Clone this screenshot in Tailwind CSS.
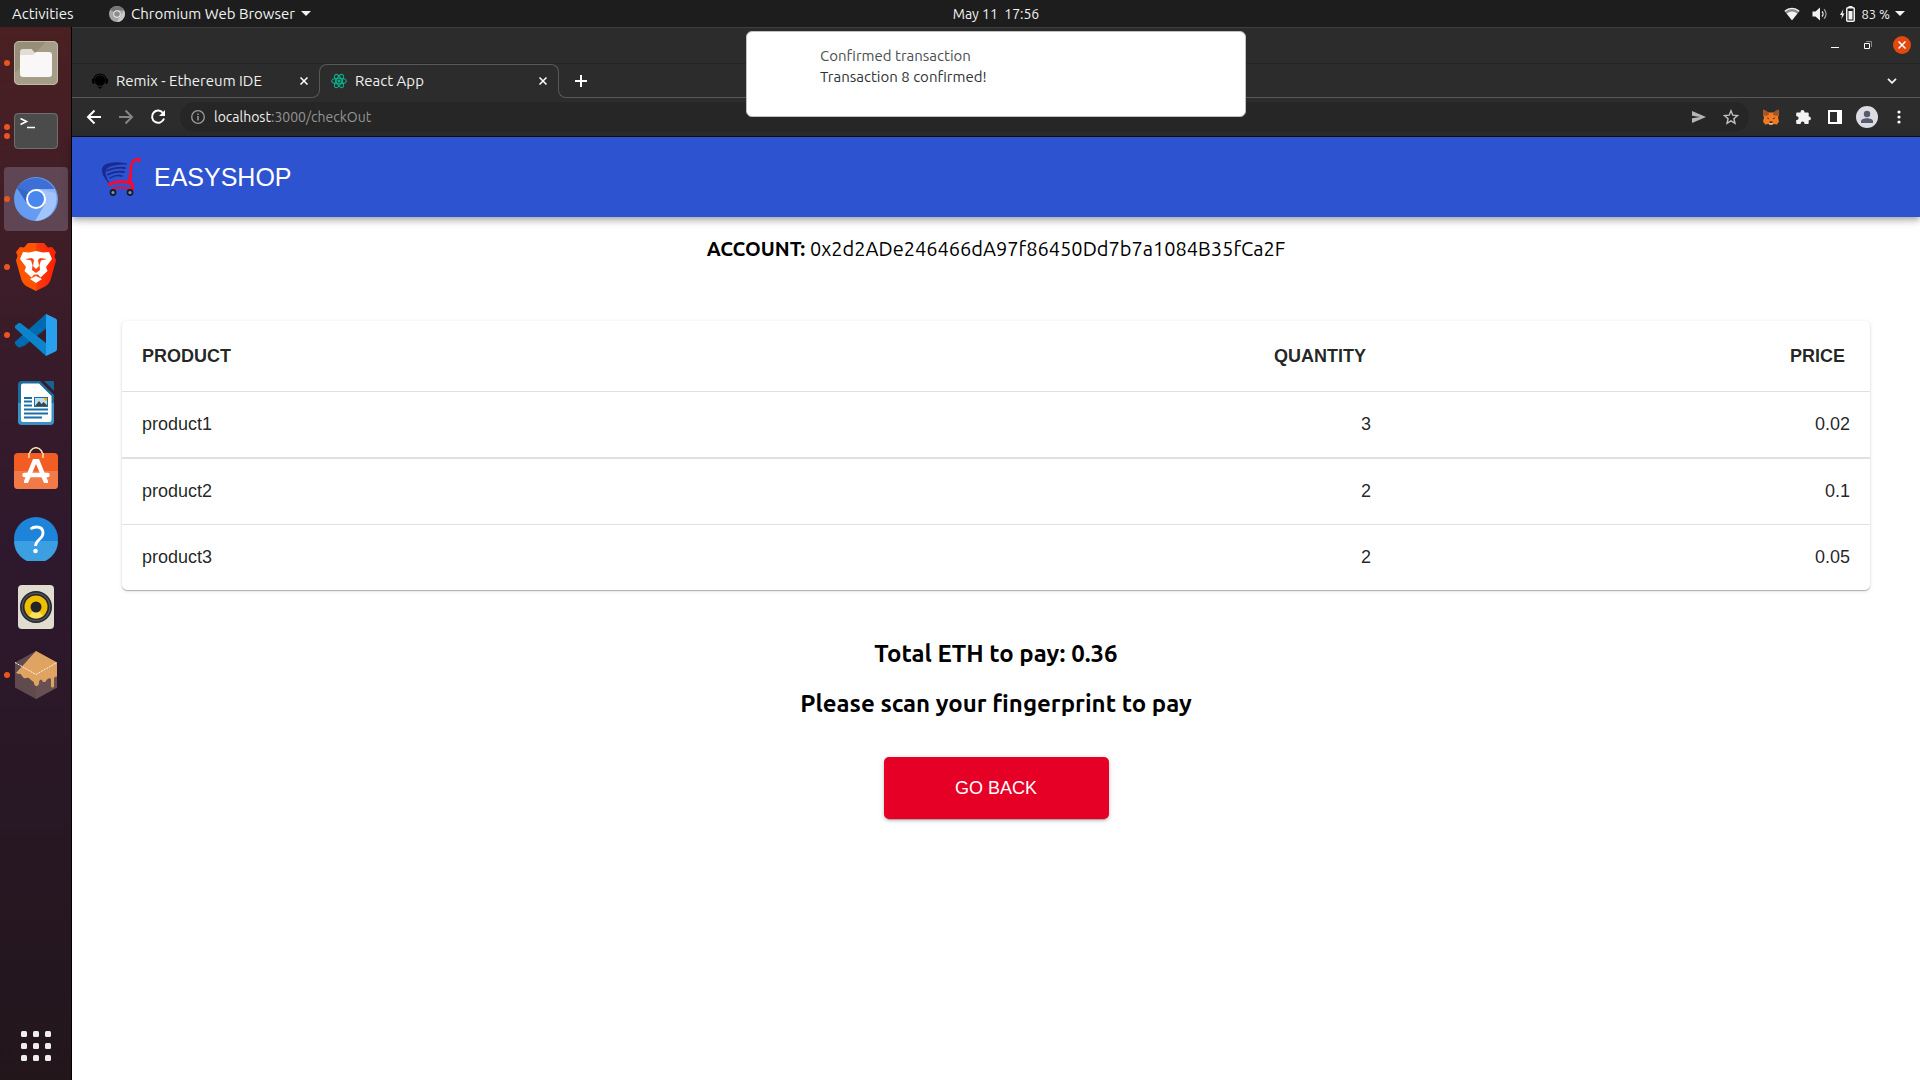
<!DOCTYPE html>
<html lang="en">
<head>
<meta charset="utf-8">
<title>React App</title>
<script src="https://cdn.jsdelivr.net/npm/@tailwindcss/browser@4"></script>
</head>
<body class="flex min-h-screen flex-col bg-white font-['Ubuntu','Noto_Sans',sans-serif] text-[15px] text-black">

<!-- System bar -->
<header class="flex h-[27px] items-center bg-[#1d1d1d] leading-[26px] whitespace-nowrap text-[#f2f2f2]">
  <button class="w-[72px] shrink-0 pl-3 text-left whitespace-nowrap">Activities</button>
  <div class="flex flex-1 basis-0 items-center">
    <button class="ml-[37px] flex items-center gap-[6px]">
      <svg class="size-4" viewBox="0 0 16 16"><circle cx="8" cy="8" r="8" fill="#a5a5a5"/><path d="M8 8 1.2 3.8A8 8 0 0 1 14.9 4.3H8z" fill="#757575"/><path d="M8 16 11.4 10 14.9 4.3A8 8 0 0 1 8 16z" fill="#c9c9c9"/><circle cx="8" cy="8" r="3.7" fill="#eee"/><circle cx="8" cy="8" r="2.8" fill="#8d8d8d"/></svg>
      <span>Chromium Web Browser</span>
      <svg class="h-[5px] w-[10px]" viewBox="0 0 10 5"><path d="M0 0h10L5 5z" fill="#f2f2f2"/></svg>
    </button>
  </div>
  <time class="text-sm leading-[26px] whitespace-pre">May 11  17:56</time>
  <div class="flex flex-1 basis-0 items-center justify-end">
    <svg class="mr-3 h-[14px] w-4" viewBox="0 0 16 14"><path d="M0.6 4.2C4.8 0.2 11.200 0.200 15.400 4.200L8 13.200z" fill="#8b8b8b"/><path d="M.8 4.200C5 .4 11 .4 15.200 4.200" fill="none" stroke="#f2f2f2" stroke-width="1.300"/><path d="M2.600 6.400C6 3.700 10 3.700 13.400 6.400L8 13.200z" fill="#f2f2f2"/></svg>
    <svg class="mr-3 h-[14px] w-4" viewBox="0 0 16 14"><path d="M0.500 4.500h3L8 .5v13L3.500 9.500h-3z" fill="#f2f2f2"/><path d="M10 4.500c1.300 1.300 1.300 3.700 0 5" fill="none" stroke="#f2f2f2" stroke-width="1.300"/><path d="M12 2.300c2.700 2.500 2.700 6.900 0 9.400" fill="none" stroke="#9a9a9a" stroke-width="1.300"/></svg>
    <svg class="mr-[6px] h-4 w-[15px]" viewBox="0 0 15 16"><path d="M3.500 3 0 9h2l-.6 4L4.500 7.500h-2z" fill="#f2f2f2"/><path d="M8.500 0h4v2h-4z" fill="#f2f2f2"/><rect x="6.750" y="1.750" width="7.500" height="13.500" rx="1" fill="none" stroke="#f2f2f2" stroke-width="1.500"/><path d="M8.500 5h4v8.500h-4z" fill="#f2f2f2"/></svg>
    <span class="mr-[5px] text-[13px] leading-[26px]">83 %</span>
    <svg class="mr-[15px] h-[5px] w-[10px]" viewBox="0 0 10 5"><path d="M0 0h10L5 5z" fill="#f2f2f2"/></svg>
  </div>
</header>

<div class="flex flex-1">

<!-- Dock -->
<nav aria-label="Dock" class="flex w-[72px] shrink-0 flex-col gap-1 border-r border-black bg-linear-to-b from-[#4a2022] via-[#2e182d] to-[#22161b] px-1 pt-1 pb-[2px]">
  <button aria-label="Files" class="relative flex size-16 items-center justify-center">
    <span class="absolute left-0 size-[6px] rounded-full bg-[#e95420]"></span>
    <svg class="size-[46px]" viewBox="0 0 46 46"><rect x="1" y="1" width="44" height="44" rx="5" fill="#978e79"/><path d="M1 40V34L34 1h6a5 5 0 0 1 5 5v34a5 5 0 0 1-5 5H6a5 5 0 0 1-5-5z" fill="#a59d88"/><rect x="1.500" y="1.500" width="43" height="43" rx="4.500" fill="none" stroke="#c0b9a6"/><path d="M7 12a3 3 0 0 1 3-3h8.500l4 4.500V20H7z" fill="#e2ddd2"/><path d="M7 15h13l3-3h13a3 3 0 0 1 3 3v19a3 3 0 0 1-3 3H10a3 3 0 0 1-3-3z" fill="#f9f8f7"/></svg>
  </button>
  <button aria-label="Terminal" class="relative flex size-16 items-center justify-center">
    <span class="absolute left-0 flex flex-col gap-[3px]"><span class="size-[6px] rounded-full bg-[#e95420]"></span><span class="size-[6px] rounded-full bg-[#e95420]"></span></span>
    <svg class="h-[38px] w-[46px]" viewBox="0 0 46 38"><rect x="1" y="1" width="44" height="36" rx="4" fill="#4b4b4b"/><rect x="1.500" y="1.500" width="43" height="35" rx="4" fill="none" stroke="#707070"/><path d="m7.500 6.500 6 3-6 3M14 15.500h8" fill="none" stroke="#fff" stroke-width="1.600"/></svg>
  </button>
  <button aria-label="Chromium" class="relative flex size-16 items-center justify-center rounded bg-[#604654]">
    <span class="absolute left-0 size-[6px] rounded-full bg-[#e95420]"></span>
    <svg class="size-[44px]" viewBox="0 0 44 44"><circle cx="22" cy="22" r="22" fill="#659cf2"/><path d="M22 22 3.500 10.100A22 22 0 0 1 40.300 12H22z" fill="#3d6fd6"/><path d="M3.500 10.100A22 22 0 0 0 3 11l9.500 15L15 16z" fill="#3566c4"/><path d="M22 12h18.300A22 22 0 0 1 21 44l10-17z" fill="#a2c3fb"/><path d="M24 12h16.300l1.500 4z" fill="#8fb3f2"/><circle cx="22" cy="22" r="10" fill="#fff"/><circle cx="22" cy="22" r="8" fill="#4a86f0"/></svg>
  </button>
  <button aria-label="Brave" class="relative flex size-16 items-center justify-center">
    <span class="absolute left-0 size-[6px] rounded-full bg-[#e95420]"></span>
    <svg class="h-12 w-[42px]" viewBox="0 0 42 48"><defs><linearGradient id="brave"><stop offset=".5" stop-color="#ff5500"/><stop offset=".52" stop-color="#fa3a10"/><stop offset="1" stop-color="#ff1f00"/></linearGradient></defs><path d="m13 0h16l4 4.500 4-.5 4 5-1.500 4 1.500 4.500-5.500 19.500c-1 3-3 5-5.500 6.500L21 48l-9-4.500C9.500 42 7.500 40 6.500 37L1 17.500 2.500 13 1 9l4-5 4 .500z" fill="url(#brave)"/><path d="m8 9 6 .5L21 8l7 1.500 6-.5 3 7-6 8 1.500 4-7 6.500-2.500-3h-4l-2.500 3-7-6.500L11 24l-6-8z" fill="#fff"/><path d="m21 33 6 3-6 4-6-4z" fill="#fff"/><path d="m10 16 7-1 2 2-1 6 3 3 3-3-1-6 2-2 7 1-6 1.500-1.500 4.500.5 5-4 3-4-3 .5-5L16 17.500z" fill="#f84210"/></svg>
  </button>
  <button aria-label="Visual Studio Code" class="relative flex size-16 items-center justify-center">
    <span class="absolute left-0 size-[6px] rounded-full bg-[#e95420]"></span>
    <svg class="size-[42px]" viewBox="0 0 42 42"><path d="m0 28 4 4 5 .3L42 6 31 0z" fill="#0064a8"/><path d="M0 28c-.5 1 0 2 .5 2.400L3 33c1 .6 2 .5 3 0L31 13V0z" fill="#006bb0"/><path d="M0 14c-.5-1 0-2 .5-2.400L3 9.500c1-.6 2-.5 3 0L31 29v13z" fill="#0b84cb"/><path d="m31 0 9 4.300c1.500.7 2 1.500 2 3v27.400c0 1.500-.5 2.300-2 3L31 42z" fill="#28a0ee"/></svg>
  </button>
  <button aria-label="LibreOffice Writer" class="flex size-16 items-center justify-center">
    <svg class="h-11 w-9" viewBox="0 0 36 44"><path d="M4 0h18l14 14v26a4 4 0 0 1-4 4H4a4 4 0 0 1-4-4V4a4 4 0 0 1 4-4z" fill="#1b6d9f"/><path d="M0 22h36v18a4 4 0 0 1-4 4H4a4 4 0 0 1-4-4z" fill="#3c92c4"/><path d="M26 0h9a1 1 0 0 1 1 1v9z" fill="#17628f"/><path d="M5 2.500h16L33.500 15v24a2 2 0 0 1-2 2H5a2 2 0 0 1-2-2V4.500a2 2 0 0 1 2-2z" fill="#fff"/><path d="M6 17h8M6 20.500h8M6 24.500h8M6 28.500h24M6 32.500h24M6 36.500h18" stroke="#1c6fa5" stroke-width="1.800"/><path d="M16 16h14v10H16z" fill="#1c6fa5"/><path d="M17 17h12v8H17z" fill="#bcdff2"/><path d="m17 25 4-5 2.500 3 2-2L29 24v1z" fill="#444"/><path d="M26 17h3v3c-2 0-3-1-3-3z" fill="#f5b400"/></svg>
  </button>
  <button aria-label="Ubuntu Software" class="flex size-16 items-center justify-center">
    <svg class="h-12 w-11" viewBox="0 0 44 48"><path d="M14.500 12c0-15 15-15 15 0" fill="none" stroke="#f5dcae" stroke-width="1.600"/><rect y="6" width="44" height="36" rx="4" fill="#f15d22"/><path d="M0 24h44v14a4 4 0 0 1-4 4H4a4 4 0 0 1-4-4z" fill="#f27a48"/><path d="M15 6v5M29 6v5" stroke="#f5dcae" stroke-width="1.600"/><path d="M19 12h6l9 22v2h-4l-8-19-8 19h-4v-2z" fill="#fff"/><path d="M10.500 28h23" stroke="#fff" stroke-width="4.500" stroke-linecap="round"/></svg>
  </button>
  <button aria-label="Help" class="flex size-16 items-center justify-center">
    <svg class="size-11" viewBox="0 0 44 44"><circle cx="22" cy="22" r="22" fill="#1d84da"/><path d="M0 24h44a22 22 0 0 1-44 0z" fill="#3b9fe2"/><path d="M16.500 12c2-1.500 4-2 6-2 4 0 6.500 2.200 6.500 6 0 6.500-7.500 6.500-7.500 13" fill="none" stroke="#fff" stroke-width="2.800"/><circle cx="21.500" cy="34" r="2.300" fill="#fff"/></svg>
  </button>
  <button aria-label="Rhythmbox" class="flex size-16 items-center justify-center">
    <svg class="h-[46px] w-[38px]" viewBox="0 0 38 46"><rect x="1" y="1" width="36" height="44" rx="4" fill="#e0dcd0"/><circle cx="19" cy="23" r="16" fill="#24262e"/><circle cx="19" cy="23" r="13.800" fill="none" stroke="#50525c" stroke-width="1.500"/><circle cx="19" cy="23" r="11.500" fill="#f0c000"/><path d="m19 23-7 9a11.500 11.500 0 0 0 14 0z" fill="#fae060"/><circle cx="19" cy="23" r="5.500" fill="#22242a"/></svg>
  </button>
  <button aria-label="Minetest" class="relative flex size-16 items-center justify-center">
    <span class="absolute left-0 size-[6px] rounded-full bg-[#e95420]"></span>
    <svg class="h-12 w-[42px]" viewBox="0 0 42 48"><path d="m21 0 21 11.500v25L21 48 0 36.500v-25z" fill="#5f4b4e"/><path d="m42 11.500v25L21 48V24z" fill="#685052"/><path d="m21 0 21 11.500V26c-1-1-2 0-3 1v8c0 2-3 2-3 0v-7c-2-2-4 0-5 2-1 2-4 1-4-1-2-1-3 1-3 3 0 4-5 4-5 0-1-3-3-2-4-4-2-3-4 0-6-1-2-1-3-5-5-4l-3-1z" fill="#e0a462"/><path d="m0 11.500 21 12 21-12" fill="none" stroke="#fff2dd" stroke-dasharray="2 1"/></svg>
  </button>
  <button aria-label="Show Applications" class="mt-auto flex size-16 items-center justify-center">
    <svg class="size-[30px]" viewBox="0 0 30 30" fill="#f0eeed"><rect width="6" height="6" rx="1.500"/><rect x="12" width="6" height="6" rx="1.500"/><rect x="24" width="6" height="6" rx="1.500"/><rect y="12" width="6" height="6" rx="1.500"/><rect x="12" y="12" width="6" height="6" rx="1.500"/><rect x="24" y="12" width="6" height="6" rx="1.500"/><rect y="24" width="6" height="6" rx="1.500"/><rect x="12" y="24" width="6" height="6" rx="1.500"/><rect x="24" y="24" width="6" height="6" rx="1.500"/></svg>
  </button>
</nav>

<!-- Browser window -->
<div class="relative flex min-w-0 flex-1 flex-col">
  <div class="flex h-[37px] items-center justify-end gap-[17px] border-t border-b border-t-[#3e3e3e] border-b-[#242424] bg-[#2c2c2c] pr-[9px] pb-px">
    <button aria-label="Minimize" class="flex size-4 items-center justify-center"><svg class="size-3" viewBox="0 0 12 12"><path d="M2 8.500h8" stroke="#fff"/></svg></button>
    <button aria-label="Restore" class="flex size-4 items-center justify-center"><svg class="size-3" viewBox="0 0 12 12" fill="none"><path d="M4 2.500h5.500V8" stroke="#888"/><path d="M2.500 4.500h5v5h-5z" stroke="#fff"/></svg></button>
    <button aria-label="Close" class="flex size-[18px] items-center justify-center rounded-full bg-[#e3490f]"><svg class="size-2" viewBox="0 0 8 8"><path d="m.5.500 7 7m0-7-7 7" stroke="#fff" stroke-width="1.500"/></svg></button>
  </div>

  <div role="tablist" class="flex h-[34px] bg-[#2c2c2c] leading-[18px] text-[#f0f0f0]">
    <div role="tab" class="mt-2 flex w-[248px] items-center rounded-br-lg border-r border-b border-[#585858] pr-2 pb-[7px] pl-5">
      <svg class="mr-2 size-4" viewBox="0 0 16 16"><circle cx="8" cy="7.500" r="5.300" fill="#000"/><path d="M1.500 7.500a6.500 6.500 0 0 1 13 0" fill="none" stroke="#000" stroke-width="1.200"/><path d="M0 6h2.500v5H1.500L0 9.500zM16 6h-2.500v5h1L16 9.500zM5 13l3 3 3-3-3 1z" fill="#000"/></svg>
      <span class="flex-1 whitespace-nowrap">Remix - Ethereum IDE</span>
      <button aria-label="Close tab" class="flex size-[14px] items-center justify-center"><svg class="size-2" viewBox="0 0 8 8"><path d="m.5.500 7 7m0-7-7 7" stroke="#fff" stroke-width="1.500"/></svg></button>
    </div>
    <div role="tab" aria-selected="true" class="-ml-px flex h-[26px] w-60 items-center rounded-t-lg border-x border-t border-[#585858] pt-[7px] pr-2 pl-[11px]">
      <svg class="mr-2 size-4" viewBox="0 0 16 16" fill="none" stroke="#08b08c" stroke-width="1.100"><ellipse cx="8" cy="8" rx="7.300" ry="2.800"/><ellipse cx="8" cy="8" rx="7.300" ry="2.800" transform="rotate(60 8 8)"/><ellipse cx="8" cy="8" rx="7.300" ry="2.800" transform="rotate(120 8 8)"/><circle cx="8" cy="8" r="1" fill="#08b08c"/></svg>
      <span class="flex-1 whitespace-nowrap">React App</span>
      <button aria-label="Close tab" class="flex size-[14px] items-center justify-center"><svg class="size-2" viewBox="0 0 8 8"><path d="m.5.500 7 7m0-7-7 7" stroke="#fff" stroke-width="1.500"/></svg></button>
    </div>
    <div class="mt-2 -ml-px flex flex-1 items-center justify-between rounded-bl-lg border-b border-l border-[#585858] pr-[23px] pb-[7px] pl-4">
      <button aria-label="New tab"><svg class="size-3" viewBox="0 0 12 12"><path d="M6 0v12M0 6h12" stroke="#fff" stroke-width="2"/></svg></button>
      <button aria-label="Search tabs"><svg class="h-[6px] w-[10px]" viewBox="0 0 10 6"><path d="m1 .8 4 4 4-4" fill="none" stroke="#f0f0f0" stroke-width="1.800"/></svg></button>
    </div>
  </div>

  <div class="flex h-[39px] items-center border-b border-[#111] bg-[#2c2c2c] pr-[13px] pl-[14px] text-sm">
    <button aria-label="Back" class="mr-4"><svg class="size-4" viewBox="0 0 16 16"><path d="M15 8H2m6.500-6.500L2 8l6.500 6.500" fill="none" stroke="#fff" stroke-width="2"/></svg></button>
    <button aria-label="Forward" class="mr-4"><svg class="size-4" viewBox="0 0 16 16"><path d="M1 8h13M7.500 1.500 14 8l-6.500 6.500" fill="none" stroke="#858585" stroke-width="2"/></svg></button>
    <button aria-label="Reload" class="mr-[14px]"><svg class="size-4" viewBox="0 0 16 16"><path d="M13.200 4.200A6.100 6.100 0 1 0 14 9.500" fill="none" stroke="#fff" stroke-width="2"/><path d="M15 1v6H9z" fill="#fff"/></svg></button>
    <div class="flex h-[30px] min-w-0 flex-1 items-center rounded-full bg-[#262626] pr-[10px] pl-[11px]">
      <svg class="mr-[9px] size-[14px]" viewBox="0 0 14 14"><circle cx="7" cy="7" r="6.300" fill="none" stroke="#9a9c9f" stroke-width="1.300"/><path d="M7 6v4.500M7 3.400v1.500" stroke="#9a9c9f" stroke-width="1.500"/></svg>
      <label for="url" class="text-[#f0f0f0]">localhost</label>
      <input id="url" value=":3000/checkOut" class="min-w-0 flex-1 bg-transparent text-[#949494] outline-none">
      <button aria-label="Share" class="mr-[17px]"><svg class="size-[14px]" viewBox="0 0 14 14"><path d="m0 1 14 6-14 6V8.300L8 7 0 5.700z" fill="#b4b4b4"/></svg></button>
      <button aria-label="Bookmark"><svg class="size-4" viewBox="0 0 16 16"><path d="m8 1.800 1.800 4.400 4.700.4-3.600 3.100 1.100 4.600L8 11.800l-4 2.500 1.100-4.600L1.500 6.600l4.700-.4z" fill="none" stroke="#c2c2c2" stroke-width="1.400"/></svg></button>
    </div>
    <div class="ml-[14px] flex items-center">
      <button aria-label="MetaMask" class="mr-4"><svg class="size-4" viewBox="0 0 16 16"><path d="m.5.500 5 3h5l5-3 .5 5-1 3 1 4-2 3-3.500-.5L9 16H7l-1.500-1-3.500.500-2-3 1-4-1-3z" fill="#f37a1d"/><path d="m.5.500 5 3 .500 2.500-4 1L0 5.500zM15.500.500l-5 3L10 6l4 1 2-1.500z" fill="#a1552e"/><path d="m3.500 8.500 2.500.500-.5 1.500zM12.500 8.500 10 9l.5 1.500z" fill="#2b3c4c"/><path d="M6 13h4l-.500 2.500h-3z" fill="#d8c6b6"/><path d="M6.500 12.500h3v1.500h-3z" fill="#222"/></svg></button>
      <button aria-label="Extensions" class="mr-4"><svg class="size-4" viewBox="0 0 16 16"><path d="M2.200 3.500h3.300V3a2 2 0 0 1 4 0v.5h3.200a1 1 0 0 1 1 1v3h.3a1.900 1.900 0 0 1 0 3.800h-.3V14a1 1 0 0 1-1 1H9.500v-.500a1.900 1.900 0 0 0-3.800 0v.5H2.200a1 1 0 0 1-1-1v-3h.5a1.900 1.900 0 0 0 0-3.800h-.5V4.500a1 1 0 0 1 1-1z" fill="#f4f4f4"/></svg></button>
      <button aria-label="Side panel" class="mr-[13px]"><svg class="size-4" viewBox="0 0 16 16"><path fill-rule="evenodd" d="M1 1h14v14H1zM3 3v10h7V3z" fill="#fff"/></svg></button>
      <button aria-label="Profile" class="mr-[13px]"><svg class="size-[22px]" viewBox="0 0 22 22"><circle cx="11" cy="11" r="11" fill="#dcdde3"/><circle cx="11" cy="8" r="3.200" fill="#565b73"/><path d="M5 17v-1.500C5 13 8 12.200 11 12.200s6 .8 6 3.300V17z" fill="#565b73"/></svg></button>
      <button aria-label="Menu" class="flex w-4 justify-center"><svg class="h-[14px] w-1" viewBox="0 0 4 14" fill="#fff"><circle cx="2" cy="2" r="1.600"/><circle cx="2" cy="7" r="1.600"/><circle cx="2" cy="12" r="1.600"/></svg></button>
    </div>
  </div>

  <!-- Shop page -->
  <div class="flex h-20 items-center gap-[13px] bg-[#2d53d0] pl-[29px] font-['Liberation_Sans',Arial,sans-serif] text-[25px] text-white shadow-[0_2px_5px_-1px_rgba(0,0,0,0.2),0_5px_6px_rgba(0,0,0,0.14),0_1px_12px_rgba(0,0,0,0.12)]">
    <svg class="size-10" viewBox="0 0 40 40" fill="none"><path d="M26 7C17 5 9 5.500 4 8c-4 2.500-3 8 0 13l4 5c-4-7-5-12-2-15 4-3 12-4 20-4z" fill="#1b2a8e" stroke="#1b2a8e" stroke-width=".8"/><g stroke="#1b2a8e" stroke-linecap="round"><path d="M24 11c-6-1-12 0-18 2.500" stroke-width="1.800"/><path d="M23 15c-6-1-11 0-16 2.500" stroke-width="1.800"/><path d="M21 19c-5-1-9 0-12 2" stroke-width="1.500"/></g><path d="M39 3c-5-2-8 1-9 7l-1 18" stroke="#f80a2e" stroke-width="2.600"/><path d="M39.500 3h-3" stroke="#f80a2e" stroke-width="3.500"/><path d="M7 28c7-4 18-5 24-1l1 6" stroke="#f80a2e" stroke-width="3"/><path d="M11 32c6-2 14-2 21 1" stroke="#f80a2e" stroke-width="2"/><path d="M29 18v8" stroke="#f80a2e" stroke-width="3"/><circle cx="12" cy="35.500" r="2.500" fill="#8793b5" stroke="#131d2e" stroke-width="1.800"/><circle cx="29" cy="35.500" r="2.500" fill="#8793b5" stroke="#131d2e" stroke-width="1.800"/></svg>
    <span class="pt-[2px]">EASYSHOP</span>
  </div>

  <main class="flex flex-col items-center px-[50px] pt-4 pb-12">
    <p class="text-[20px] leading-8"><strong>ACCOUNT:</strong> 0x2d2ADe246466dA97f86450Dd7b7a1084B35fCa2F</p>

    <div class="mt-14 w-full rounded-[5px] shadow-[0_3px_1px_-3px_rgba(0,0,0,0.2),0_1px_1px_rgba(0,0,0,0.24),0_1px_4px_rgba(0,0,0,0.12)]">
      <table class="w-full table-fixed border-separate border-spacing-0 font-['Liberation_Sans',Arial,sans-serif] text-[18px] text-black/87">
        <colgroup><col><col class="w-[30%]"><col class="w-[27.4%]"></colgroup>
        <thead>
          <tr class="h-[71px] [&>th]:border-b [&>th]:border-[#e0e0e0]"><th class="px-5 text-left">PRODUCT</th><th class="pr-[25px] text-right">QUANTITY</th><th class="pr-[25px] text-right">PRICE</th></tr>
        </thead>
        <tbody>
          <tr class="h-[67px] [&>td]:border-b-2 [&>td]:border-[#e0e0e0]"><td class="px-5">product1</td><td class="px-5 text-right">3</td><td class="px-5 text-right">0.02</td></tr>
          <tr class="h-[66px] [&>td]:border-b [&>td]:border-[#e0e0e0]"><td class="px-5">product2</td><td class="px-5 text-right">2</td><td class="px-5 text-right">0.1</td></tr>
          <tr class="h-[65px]"><td class="px-5">product3</td><td class="px-5 text-right">2</td><td class="px-5 text-right">0.05</td></tr>
        </tbody>
      </table>
    </div>

    <h2 class="mt-12 text-[24px] leading-8 font-bold">Total ETH to pay: 0.36</h2>
    <h2 class="mt-[18px] text-[24px] leading-8 font-bold">Please scan your fingerprint to pay</h2>
    <button class="mt-[37px] h-[62px] w-[225px] rounded-[5px] bg-[#e60026] pt-px font-['Liberation_Sans',Arial,sans-serif] text-[18px] text-white shadow-[0_4px_1px_-3px_rgba(0,0,0,0.2),0_2px_3px_rgba(0,0,0,0.14),0_1px_6px_rgba(0,0,0,0.12)]">GO BACK</button>
  </main>

  <!-- Notification over the window -->
  <div role="status" class="absolute top-1 left-1/2 h-[86px] w-[500px] -translate-x-1/2 rounded-md border border-[#c0c0c0] bg-white pt-[13px] pl-[73px] leading-[21px]">
    <p class="text-[#4a4f50]">Confirmed transaction</p>
    <p class="text-[#2e3436]">Transaction 8 confirmed!</p>
  </div>
</div>
</div>
</body>
</html>
